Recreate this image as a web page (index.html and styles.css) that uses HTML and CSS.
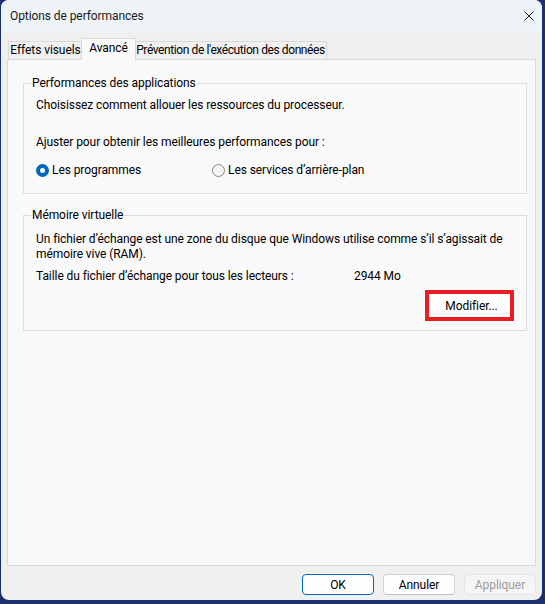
FILE: index.html
```html
<!DOCTYPE html>
<html lang="fr">
<head>
<meta charset="utf-8">
<title>Options de performances</title>
<link rel="stylesheet" href="styles.css">
</head>
<body>
<div class="window">
  <div class="titlebar">
    <span class="title">Options de performances</span>
    <svg class="close" width="10" height="10" viewBox="0 0 10 10"><path d="M0.5 0.5 L9.5 9.5 M9.5 0.5 L0.5 9.5" stroke="#1a1a1a" stroke-width="1" fill="none"/></svg>
  </div>
  <div class="main">
    <div class="tabs">
      <div class="tab t1">Effets visuels</div>
      <div class="tab t2 active">Avancé</div>
      <div class="tab t3">Prévention de l'exécution des données</div>
    </div>
    <div class="panel">
      <fieldset class="group g1">
        <legend>Performances des applications</legend>
        <div class="inner">
          <p class="line">Choisissez comment allouer les ressources du processeur.</p>
          <p class="line adjust">Ajuster pour obtenir les meilleures performances pour :</p>
          <div class="radios">
            <div class="radio first checked"><span class="dot"></span><span>Les programmes</span></div>
            <div class="radio"><span class="dot"></span><span>Les services d’arrière-plan</span></div>
          </div>
        </div>
      </fieldset>
      <fieldset class="group g2">
        <legend>Mémoire virtuelle</legend>
        <div class="inner">
          <p class="desc">Un fichier d’échange est une zone du disque que Windows utilise comme s’il s’agissait de<br>mémoire vive (RAM).</p>
          <div class="size"><span class="size-label">Taille du fichier d’échange pour tous les lecteurs :</span><span>2944 Mo</span></div>
          <div class="modify-row"><div class="modify">Modifier...</div></div>
        </div>
      </fieldset>
    </div>
    <div class="buttons">
      <div class="btn default">OK</div>
      <div class="btn">Annuler</div>
      <div class="btn disabled">Appliquer</div>
    </div>
  </div>
</div>
</body>
</html>
```
FILE: styles.css
```css
html, body {
  margin: 0;
  padding: 0;
}
body {
  width: 545px;
  height: 604px;
  overflow: hidden;
  background: #1d2f6e;
  font-family: "Segoe UI", Roboto, "Liberation Sans", sans-serif;
  font-size: 12px;
  letter-spacing: -0.08px;
  color: #000;
}
.window {
  margin-left: 1px;
  width: 541px;
  height: 600px;
  background: #f0f0f0;
  border-radius: 8px;
  overflow: hidden;
  display: flex;
  flex-direction: column;
}
.titlebar {
  height: 32px;
  flex: none;
  background: #eef3f8;
  display: flex;
  align-items: center;
  justify-content: space-between;
  padding: 0 8px 0 9px;
}
.title {
  color: #1a1a1a;
  line-height: 16px;
}
.close {
  display: block;
}
.main {
  padding: 6px 6px 0 6px;
  display: flex;
  flex-direction: column;
}
.tabs {
  height: 21px;
  display: flex;
  align-items: flex-end;
  padding-left: 1px;
  position: relative;
  z-index: 1;
}
.tab {
  box-sizing: border-box;
  border: 1px solid #d9d9d9;
  border-bottom: none;
  background: #f0f0f0;
  height: 18px;
  padding: 0 0 1px 0;
  line-height: 16px;
  text-align: center;
  white-space: nowrap;
}
.t1 {
  width: 75px;
}
.t3 {
  width: 193px;
  letter-spacing: -0.4px;
}
.tab.active {
  width: 55px;
  height: 22px;
  background: #f9f9f9;
  margin: 0 -2px -1px -2px;
  padding: 1px 0 4px 0;
  position: relative;
  z-index: 2;
}
.panel {
  box-sizing: border-box;
  height: 507px;
  border: 1px solid #d9d9d9;
  background: #f9f9f9;
  padding: 15px 8px 0 15px;
}
.group {
  margin: 0;
  border: 1px solid #dcdcdc;
  padding: 0 12px 15px 7px;
  min-width: 0;
}
.group legend {
  padding: 0 1px;
  line-height: 16px;
}
.inner {
  margin-left: 5px;
}
.line {
  margin: 0;
  line-height: 16px;
}
.g1 .inner {
  padding-top: 6px;
}
.adjust {
  margin-top: 21px;
}
.radios {
  margin-top: 12px;
  display: flex;
  line-height: 16px;
}
.radio {
  display: flex;
  align-items: center;
}
.radio.first {
  width: 176px;
}
.dot {
  width: 11px;
  height: 11px;
  border: 1px solid #858585;
  border-radius: 50%;
  background: #f5f5f5;
  margin-right: 3px;
  box-sizing: content-box;
}
.radio.checked .dot {
  width: 5px;
  height: 5px;
  border: 4px solid #0067c0;
  background: #ffffff;
}
.g2 {
  margin-top: 13px;
  padding-bottom: 9px;
}
.g2 .inner {
  padding-top: 9px;
}
.desc {
  margin: 0;
  line-height: 15px;
  white-space: nowrap;
}
.size {
  margin-top: 6px;
  line-height: 16px;
  display: flex;
}
.size-label {
  width: 318px;
  flex: none;
}
.modify-row {
  margin-top: 6px;
  display: flex;
  justify-content: flex-end;
}
.modify {
  box-sizing: border-box;
  width: 89px;
  height: 31px;
  border: 4px solid #ec1c24;
  background: #fdfdfd;
  display: flex;
  align-items: center;
  justify-content: center;
  padding-left: 4px;
}
.buttons {
  margin-top: 8px;
  display: flex;
  justify-content: flex-end;
  gap: 9px;
}
.btn {
  box-sizing: border-box;
  width: 72px;
  height: 21px;
  border: 1px solid #d0d0d0;
  border-bottom-color: #bdbdbd;
  border-radius: 4px;
  background: #fdfdfd;
  display: flex;
  align-items: center;
  justify-content: center;
  line-height: 16px;
}
.btn.default {
  border-color: #0067c0;
}
.btn.disabled {
  background: #f5f5f5;
  border-color: #e5e5e5;
  color: #9d9d9d;
}
```
